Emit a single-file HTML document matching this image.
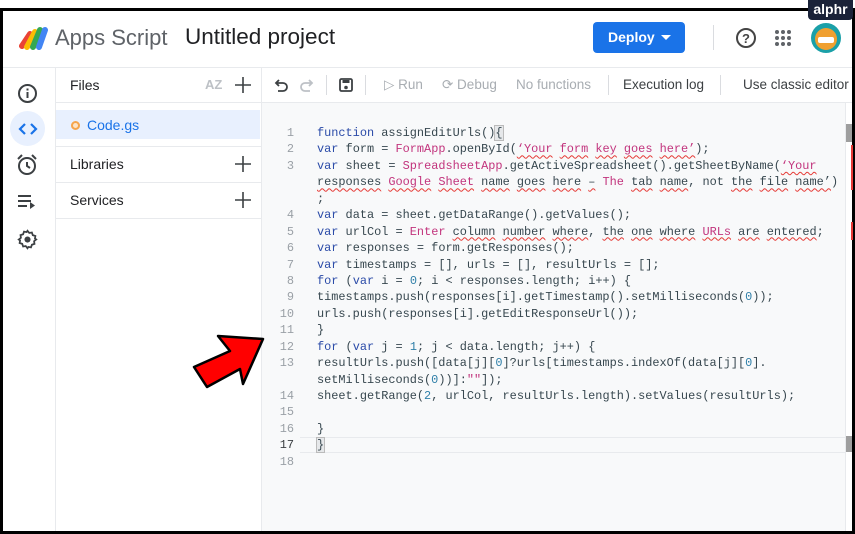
<!DOCTYPE html>
<html><head><meta charset="utf-8"><style>
*{margin:0;padding:0;box-sizing:border-box}
body{width:855px;height:534px;background:#fff;position:relative;overflow:hidden;font-family:"Liberation Sans",sans-serif;color:#3c4043}
.a{position:absolute}
.code{position:absolute;left:317px;top:125px;font-family:"Liberation Mono",monospace;font-size:11.9px;color:#37474f}
.code div{height:16.45px;line-height:16.45px;white-space:pre}
.ln{position:absolute;left:262px;width:32px;top:125px;font-family:"Liberation Mono",monospace;font-size:11.9px;color:#9aa0a6;text-align:right}
.ln div{height:16.45px;line-height:16.45px}
.k{color:#2b4ba8}.p{color:#c2347d}.n{color:#2f7fa8}
.w{text-decoration:underline wavy #e53935;text-decoration-thickness:1px;text-underline-offset:2px}
.tb{font-size:13.5px;color:#a8adb2;top:77px}
.sep{width:1px;background:#dadce0}
</style></head><body>
<div class="a" style="left:0;top:8px;width:810px;height:3px;background:#000"></div>
<div class="a" style="left:0;top:8px;width:3px;height:526px;background:#000"></div>
<div class="a" style="left:0;top:531px;width:855px;height:3px;background:#000"></div>
<div class="a" style="left:852px;top:8px;width:3px;height:526px;background:#000"></div>
<div class="a" style="left:808px;top:0;width:45px;height:20px;background:#1a2238;border-radius:0 0 4px 4px;color:#fff;font-weight:bold;font-size:14px;text-align:center;line-height:18px">alphr</div>

<svg class="a" style="left:18px;top:26px" width="32" height="24" viewBox="0 0 32 24">
<path d="M4 20 L12 8" stroke="#ea4335" stroke-width="6" stroke-linecap="round"/>
<path d="M9 21 L17 6" stroke="#fbbc04" stroke-width="6" stroke-linecap="round"/>
<path d="M15 21 L22 4" stroke="#34a853" stroke-width="6" stroke-linecap="round"/>
<path d="M21 21 L27 4" stroke="#4285f4" stroke-width="6" stroke-linecap="round"/>
</svg>
<div class="a" style="left:55px;top:25px;font-size:22px;color:#5f6368">Apps Script</div>
<div class="a" style="left:185px;top:24px;font-size:22.5px;color:#202124">Untitled project</div>
<div class="a" style="left:593px;top:22px;width:92px;height:31px;background:#1a73e8;border-radius:4px;color:#fff;font-size:14px;font-weight:bold;line-height:31px;padding-left:15px">Deploy<span class="a" style="left:68px;top:13px;width:0;height:0;border-left:5px solid transparent;border-right:5px solid transparent;border-top:5px solid #fff"></span></div>
<div class="a sep" style="left:713px;top:25px;height:25px"></div>
<svg class="a" style="left:735px;top:27px" width="22" height="22" viewBox="0 0 22 22"><circle cx="11" cy="11" r="9" fill="none" stroke="#444" stroke-width="2"/><text x="11" y="16" font-size="13" font-weight="bold" text-anchor="middle" fill="#444" font-family="Liberation Sans">?</text></svg>
<svg class="a" style="left:775px;top:30px" width="16" height="16"><g fill="#5f6368"><circle cx="2" cy="2" r="2"/><circle cx="8" cy="2" r="2"/><circle cx="14" cy="2" r="2"/><circle cx="2" cy="8" r="2"/><circle cx="8" cy="8" r="2"/><circle cx="14" cy="8" r="2"/><circle cx="2" cy="14" r="2"/><circle cx="8" cy="14" r="2"/><circle cx="14" cy="14" r="2"/></g></svg>
<div class="a" style="left:811px;top:23px;width:30px;height:30px;border-radius:50%;background:#1ba0a8;overflow:hidden"><div class="a" style="left:4px;top:5px;width:22px;height:22px;border-radius:50%;background:#f0a030"></div><div class="a" style="left:7px;top:14px;width:16px;height:6px;background:#fff;border-radius:2px"></div></div>
<div class="a" style="left:3px;top:67px;width:849px;height:1px;background:#e8eaed"></div>

<div class="a" style="left:55px;top:68px;width:1px;height:463px;background:#e8eaed"></div>
<svg class="a" style="left:17px;top:83px" width="21" height="21"><circle cx="10.5" cy="10.5" r="8.5" fill="none" stroke="#3c4043" stroke-width="2"/><rect x="9.5" y="9" width="2" height="6" fill="#3c4043"/><rect x="9.5" y="5.5" width="2" height="2" fill="#3c4043"/></svg>
<div class="a" style="left:10px;top:111px;width:35px;height:35px;border-radius:50%;background:#e8f0fe"></div>
<svg class="a" style="left:18px;top:121px" width="20" height="16"><path d="M7 3 L2 8 L7 13 M13 3 L18 8 L13 13" fill="none" stroke="#1a73e8" stroke-width="2.2"/></svg>
<svg class="a" style="left:16px;top:154px" width="22" height="22"><circle cx="11" cy="12" r="8" fill="none" stroke="#3c4043" stroke-width="2"/><path d="M11 8 V12 L14 14" fill="none" stroke="#3c4043" stroke-width="2"/><path d="M2 5 L6 1 M20 5 L16 1" stroke="#3c4043" stroke-width="2"/></svg>
<svg class="a" style="left:18px;top:195px" width="20" height="14"><g fill="#3c4043"><rect x="0" y="0" width="13" height="2"/><rect x="0" y="5" width="13" height="2"/><rect x="0" y="10" width="9" height="2"/><path d="M12 7 L17 10.5 L12 14Z"/></g></svg>
<svg class="a" style="left:17px;top:229px" width="21" height="21" viewBox="0 0 24 24"><path fill="none" stroke="#3c4043" stroke-width="2" d="M12 2l2 2.5 3-.5 1 3 3 1-.5 3L22 12l-2.5 2 .5 3-3 1-1 3-3-.5L12 22l-2-2.5-3 .5-1-3-3-1 .5-3L2 12l2.5-2-.5-3 3-1 1-3 3 .5z"/><circle cx="12" cy="12" r="3.5" fill="#3c4043"/></svg>

<div class="a" style="left:70px;top:77px;font-size:14px;color:#202124">Files</div>
<div class="a" style="left:205px;top:77px;font-size:13px;color:#bdc1c6;font-weight:bold">AZ</div>
<svg class="a" style="left:235px;top:77px" width="16" height="16"><path d="M8 0V16M0 8H16" stroke="#3c4043" stroke-width="1.6"/></svg>
<div class="a" style="left:56px;top:102px;width:206px;height:1px;background:#e8eaed"></div>
<div class="a" style="left:56px;top:110px;width:204px;height:29px;background:#e8f0fe"></div>
<div class="a" style="left:71px;top:121px;width:9px;height:9px;border-radius:50%;border:2px solid #f6a54c;background:#fde4c7"></div>
<div class="a" style="left:87px;top:117px;font-size:14px;color:#1a73e8">Code.gs</div>
<div class="a" style="left:56px;top:146px;width:206px;height:1px;background:#e8eaed"></div>
<div class="a" style="left:70px;top:156px;font-size:14px;color:#202124">Libraries</div>
<svg class="a" style="left:235px;top:156px" width="16" height="16"><path d="M8 0V16M0 8H16" stroke="#3c4043" stroke-width="1.6"/></svg>
<div class="a" style="left:56px;top:182px;width:206px;height:1px;background:#e8eaed"></div>
<div class="a" style="left:70px;top:192px;font-size:14px;color:#202124">Services</div>
<svg class="a" style="left:235px;top:192px" width="16" height="16"><path d="M8 0V16M0 8H16" stroke="#3c4043" stroke-width="1.6"/></svg>
<div class="a" style="left:56px;top:218px;width:206px;height:1px;background:#e8eaed"></div>
<div class="a" style="left:261px;top:68px;width:1px;height:463px;background:#e8eaed"></div>

<svg class="a" style="left:274px;top:78px" width="14" height="14"><path d="M2 5 H9 A4 4 0 0 1 9 13 H4 M5 2 L2 5 L5 8" fill="none" stroke="#3c4043" stroke-width="1.8"/></svg>
<svg class="a" style="left:300px;top:78px" width="14" height="14"><path d="M12 5 H5 A4 4 0 0 0 5 13 H10 M9 2 L12 5 L9 8" fill="none" stroke="#bdc1c6" stroke-width="1.8"/></svg>
<div class="a sep" style="left:326px;top:75px;height:20px"></div>
<svg class="a" style="left:339px;top:78px" width="14" height="14"><rect x="1" y="1" width="12" height="12" rx="1.5" fill="none" stroke="#3c4043" stroke-width="1.8"/><rect x="3.5" y="2" width="7" height="3" fill="#3c4043"/><circle cx="7" cy="9.5" r="1.8" fill="#3c4043"/></svg>
<div class="a sep" style="left:365px;top:75px;height:20px"></div>
<div class="a tb" style="left:384px">▷ Run</div>
<div class="a tb" style="left:442px">⟳ Debug</div>
<div class="a tb" style="left:516px">No functions</div>
<div class="a sep" style="left:608px;top:75px;height:20px"></div>
<div class="a tb" style="left:623px;color:#3c4043">Execution log</div>
<div class="a sep" style="left:720px;top:75px;height:20px"></div>
<div class="a tb" style="left:743px;color:#3c4043">Use classic editor</div>
<div class="a" style="left:262px;top:102px;width:590px;height:1px;background:#e8eaed"></div>

<div class="a" style="left:262px;top:103px;width:583px;height:428px;background:#f8f9fa"></div>
<div class="a" style="left:845px;top:103px;width:7px;height:428px;background:#fff;border-left:1px solid #e8eaed"></div>
<div class="a" style="left:846px;top:124px;width:6px;height:18px;background:#9e9e9e"></div>
<div class="a" style="left:846px;top:436px;width:6px;height:16px;background:#9e9e9e"></div>
<div class="a" style="left:851px;top:145px;width:2px;height:45px;background:#e53935"></div>
<div class="a" style="left:851px;top:222px;width:2px;height:18px;background:#e53935"></div>
<div class="a" style="left:300px;top:437px;width:545px;height:16px;border-top:1px solid #e8eaed;border-bottom:1px solid #e8eaed"></div>

<div class="ln"><div>1</div><div>2</div><div>3</div><div></div><div></div><div>4</div><div>5</div><div>6</div><div>7</div><div>8</div><div>9</div><div>10</div><div>11</div><div>12</div><div>13</div><div></div><div>14</div><div>15</div><div>16</div><div style="color:#3c4043">17</div><div>18</div></div>
<div class="code"><div><span class="k">function</span> assignEditUrls()<span style="background:#e6e8ea;outline:1px solid #bbb">{</span></div><div><span class="k">var</span> form = <span class="p">FormApp</span>.openById(<span class="p w">‘Your</span> <span class="p w">form</span> <span class="p w">key</span> <span class="p w">goes</span> <span class="p w">here’</span>);</div><div><span class="k">var</span> sheet = <span class="p">SpreadsheetApp</span>.getActiveSpreadsheet().getSheetByName(<span class="p w">‘Your</span></div><div><span class="w">responses</span> <span class="p w">Google</span> <span class="p w">Sheet</span> <span class="w">name</span> <span class="w">goes</span> <span class="w">here</span> <span class="w">–</span> <span class="p">The</span> <span class="w">tab</span> <span class="w">name</span>, not <span class="w">the</span> <span class="w">file</span> <span class="w">name’</span>)</div><div>;</div><div><span class="k">var</span> data = sheet.getDataRange().getValues();</div><div><span class="k">var</span> urlCol = <span class="p">Enter</span> <span class="w">column</span> <span class="w">number</span> <span class="w">where</span>, <span class="w">the</span> <span class="w">one</span> <span class="w">where</span> <span class="p w">URLs</span> <span class="w">are</span> <span class="w">entered</span>;</div><div><span class="k">var</span> responses = form.getResponses();</div><div><span class="k">var</span> timestamps = [], urls = [], resultUrls = [];</div><div><span class="k">for</span> (<span class="k">var</span> i = <span class="n">0</span>; i &lt; responses.length; i++) {</div><div>timestamps.push(responses[i].getTimestamp().setMilliseconds(<span class="n">0</span>));</div><div>urls.push(responses[i].getEditResponseUrl());</div><div>}</div><div><span class="k">for</span> (<span class="k">var</span> j = <span class="n">1</span>; j &lt; data.length; j++) {</div><div>resultUrls.push([data[j][<span class="n">0</span>]?urls[timestamps.indexOf(data[j][<span class="n">0</span>].</div><div>setMilliseconds(<span class="n">0</span>))]:<span class="p">""</span>]);</div><div>sheet.getRange(<span class="n">2</span>, urlCol, resultUrls.length).setValues(resultUrls);</div><div></div><div>}</div><div><span style="background:#e6e8ea;outline:1px solid #bbb">}</span></div><div></div></div>

<svg class="a" style="left:0;top:0" width="855" height="534"><polygon points="263,339 218,336 230,351 194,367 207,387 240,369 243,384" fill="#f00" stroke="#000" stroke-width="2.5" stroke-linejoin="round"/></svg>
</body></html>
